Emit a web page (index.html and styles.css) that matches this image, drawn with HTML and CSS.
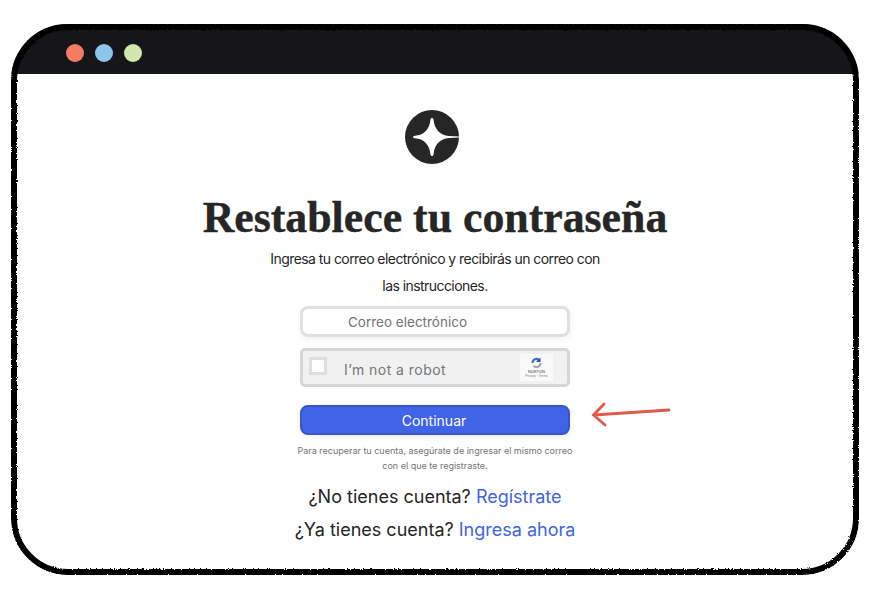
FILE: index.html
```html
<!DOCTYPE html>
<html lang="es">

<head>
    <meta charset="UTF-8">
    <meta name="viewport" content="width=device-width, initial-scale=1.0">
    <title>Restablece tu contraseña</title>
    <link rel="stylesheet" href="styles.css">
</head>

<body>
    <svg class="filters" width="0" height="0">
        <filter id="rough" x="-5%" y="-5%" width="110%" height="110%">
            <feTurbulence type="fractalNoise" baseFrequency="0.9" numOctaves="2" seed="4"></feTurbulence>
            <feDisplacementMap in="SourceGraphic" scale="3"></feDisplacementMap>
        </filter>
    </svg>

    <div class="window">
        <div class="window-bar">
            <span class="dot dot-red"></span>
            <span class="dot dot-blue"></span>
            <span class="dot dot-green"></span>
        </div>

        <div class="content">
            <svg class="logo" width="54" height="54" viewBox="0 0 54 54">
                <circle cx="27" cy="27" r="27" fill="#262626"></circle>
                <path d="M27 8 C27.900 8 28.400 8.600 28.600 10 C29.400 19 35 25.400 44 25.900 L54 26.400 L54 27.600 L44 28.100 C35 28.600 29.400 35 28.600 44 C28.400 45.400 27.900 46 27 46 C26.100 46 25.600 45.400 25.400 44 C24.600 35 19 28.600 10 28.200 C8.600 28.100 8 27.700 8 27 C8 26.300 8.600 25.900 10 25.800 C19 25.400 24.600 19 25.400 10 C25.600 8.600 26.100 8 27 8 Z" fill="#fff"></path>
            </svg>

            <h1>Restablece tu contraseña</h1>
            <p class="subtitle">Ingresa tu correo electrónico y recibirás un correo con<br>las instrucciones.</p>

            <form class="form">
                <input class="email" type="text" placeholder="Correo electrónico">

                <div class="captcha">
                    <span class="captcha-check"></span>
                    <span class="captcha-label">I’m not a robot</span>
                    <div class="captcha-badge">
                        <svg width="13" height="12" viewBox="0 0 13 12">
                            <path d="M2.500 6 A4 4 0 0 1 9 2.800" fill="none" stroke="#3d6fd0" stroke-width="2.200"></path>
                            <path d="M10.500 0.500 L10.500 5 L6 5 Z" fill="#2a4fb0"></path>
                            <path d="M10.500 6 A4 4 0 0 1 3.500 8.800" fill="none" stroke="#a9abb0" stroke-width="2.200"></path>
                        </svg>
                        <span class="badge-name">NORTON</span>
                        <span class="badge-links">Privacy - Terms</span>
                    </div>
                </div>

                <button type="button">Continuar</button>
            </form>

            <p class="note">Para recuperar tu cuenta, asegúrate de ingresar el mismo correo<br>con el que te registraste.</p>
            <p class="alt">¿No tienes cuenta? <a href="#">Regístrate</a></p>
            <p class="alt">¿Ya tienes cuenta? <a href="#">Ingresa ahora</a></p>
        </div>

        <svg class="arrow" width="82" height="26" viewBox="0 0 82 26">
            <path d="M79 9 L4 14 M14 3 L3.500 14 L15 24" fill="none" stroke="#e2584a" stroke-width="2.800" stroke-linecap="round"></path>
        </svg>

        <svg class="window-edge" width="848" height="551" viewBox="0 0 848 551">
            <rect x="3" y="3" width="842" height="545" rx="54" fill="none" stroke="#000" stroke-width="6" filter="url(#rough)"></rect>
        </svg>
    </div>
</body>

</html>
```

FILE: styles.css
```css
body {
    margin: 0;
    background-color: white;
    font-family: Inter, Arial, sans-serif;
    color: #262626;
}

.filters {
    position: absolute;
}

.window {
    position: relative;
    box-sizing: border-box;
    width: 848px;
    height: 551px;
    margin: 24px 0 0 11px;
    border-radius: 56px;
    overflow: hidden;
    background-color: white;
}

.window-edge {
    position: absolute;
    top: 0;
    left: 0;
}

.window-bar {
    display: flex;
    align-items: center;
    gap: 11px;
    height: 50px;
    padding: 8px 0 0 55px;
    box-sizing: border-box;
    background-color: #15151a;
}

.dot {
    width: 18px;
    height: 18px;
    border-radius: 50%;
}

.dot-red {
    background-color: #f37c63;
}

.dot-blue {
    background-color: #8cc6ec;
}

.dot-green {
    background-color: #d2e6ae;
}

.content {
    display: flex;
    flex-direction: column;
    align-items: center;
    padding: 36px 0 0;
}

.logo {
    margin-right: 6px;
}

h1 {
    margin: 27px 0 0;
    font-family: "Liberation Serif", Georgia, serif;
    font-size: 43.800px;
    line-height: 52px;
    font-weight: bold;
    color: #262626;
    -webkit-text-stroke: 0.4px #262626;
}

.subtitle {
    margin: 2px 0 0;
    font-size: 14px;
    line-height: 27px;
    letter-spacing: -0.56px;
    text-align: center;
}

.form {
    display: flex;
    flex-direction: column;
    width: 270px;
    margin-top: 7px;
}

.email {
    box-sizing: border-box;
    height: 31px;
    padding: 0 0 0 45px;
    border: 3px solid #e0e0e0;
    border-radius: 8px;
    background-color: white;
    font-family: inherit;
    font-size: 13.500px;
    box-shadow: 0 2px 6px rgba(0, 0, 0, 0.06);
}

.email::placeholder {
    color: #737373;
    opacity: 1;
}

.captcha {
    display: flex;
    align-items: center;
    box-sizing: border-box;
    height: 39px;
    margin-top: 11px;
    padding: 0 14px 0 6px;
    border: 3px solid #d6d6d6;
    border-radius: 5px;
    background-color: #f1f1f1;
}

.captcha-check {
    align-self: flex-start;
    width: 12px;
    height: 12px;
    margin-top: 6px;
    border: 3px solid #dedede;
    background-color: white;
}

.captcha-label {
    margin: 3px 0 0 17px;
    font-size: 14px;
    color: #757575;
    letter-spacing: 0.45px;
}

.captcha-badge {
    display: flex;
    flex-direction: column;
    align-items: center;
    width: 33px;
    height: 27px;
    margin-left: auto;
    padding-top: 3px;
    box-sizing: border-box;
    background-color: #f9f9f9;
}

.badge-name {
    font-size: 4px;
    line-height: 5px;
    color: #444;
}

.badge-links {
    font-size: 3px;
    line-height: 4px;
    color: #777;
}

button {
    height: 30px;
    margin-top: 18px;
    padding: 0 2px 0 0;
    border: 2px solid #3a56c4;
    border-radius: 8px;
    background-color: #4063e8;
    color: white;
    font-family: inherit;
    font-size: 14px;
    box-shadow: 0 2px 6px rgba(0, 0, 0, 0.08);
}

.note {
    margin: 8px 0 0;
    font-size: 9px;
    line-height: 15px;
    color: #737373;
    text-align: center;
}

.alt {
    margin: 0;
    font-size: 18px;
    line-height: 33px;
    color: #262626;
}

.note + .alt {
    margin-top: 7px;
}

.alt a {
    color: #3f63e6;
    text-decoration: none;
}

.arrow {
    position: absolute;
    left: 579px;
    top: 377px;
}
```
